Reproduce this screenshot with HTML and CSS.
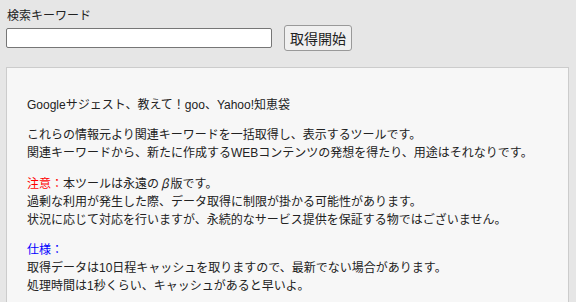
FILE: index.html
```html
<!DOCTYPE html>
<html lang="ja">
<head>
    <meta charset="UTF-8">
    <meta name="viewport" content="width=device-width, initial-scale=1.0">
    <title>関連キーワード取得ツール</title>
    <link rel="stylesheet" href="styles.css">
</head>
<body>
    <div class="wrapper">
        <form class="search" onsubmit="return false;">
            <label class="search-label" for="keyword">検索キーワード</label>
            <div class="search-row">
                <input type="text" id="keyword" class="search-input">
                <button type="submit" class="btn">取得開始</button>
            </div>
        </form>

        <div class="info">
            <p>Googleサジェスト、教えて！goo、Yahoo!知恵袋</p>
            <p>
                これらの情報元より関連キーワードを一括取得し、表示するツールです。<br>
                関連キーワードから、新たに作成するWEBコンテンツの発想を得たり、用途はそれなりです。
            </p>
            <p>
                <span class="note">注意：</span>本ツールは永遠の<span class="beta">β</span>版です。<br>
                過剰な利用が発生した際、データ取得に制限が掛かる可能性があります。<br>
                状況に応じて対応を行いますが、永続的なサービス提供を保証する物ではございません。
            </p>
            <p>
                <span class="spec">仕様：</span><br>
                取得データは10日程キャッシュを取りますので、最新でない場合があります。<br>
                処理時間は1秒くらい、キャッシュがあると早いよ。
            </p>
        </div>
    </div>
</body>
</html>
```

FILE: styles.css
```css
body {
    font-family: "Liberation Sans", "Noto Sans CJK JP", sans-serif;
    font-size: 12px;
    line-height: 18px;
    color: #222;
    background-color: #e6e6e6;
    margin: 0;
    padding: 0;
}
.wrapper {
    padding: 7px 7px 0 6px;
}
.search-label {
    display: block;
    padding-left: 1px;
}
.search-row {
    display: flex;
    align-items: center;
    gap: 12px;
    height: 26px;
}
.search-input {
    width: 266px;
    height: 20px;
    box-sizing: border-box;
    margin: 0;
    border: 1px solid #767676;
    border-radius: 2px;
    background-color: #fff;
}
.btn {
    height: 26px;
    width: 68px;
    margin: 0;
    padding: 0;
    font-family: "Noto Sans CJK JP", sans-serif;
    font-size: 14px;
    color: #222;
    background-color: #f0f0f0;
    border: 1px solid #999;
    border-radius: 3px;
    cursor: pointer;
}
.info {
    margin-top: 16px;
    padding: 16px 20px;
    background-color: #f7f7f7;
    border: 1px solid #ccc;
}
.info p {
    margin: 12px 0;
}
.note {
    color: #f00;
}
.spec {
    color: #00f;
}
.beta {
    font-family: "Noto Sans CJK JP", sans-serif;
    font-style: italic;
    padding: 0 2px;
}
```
